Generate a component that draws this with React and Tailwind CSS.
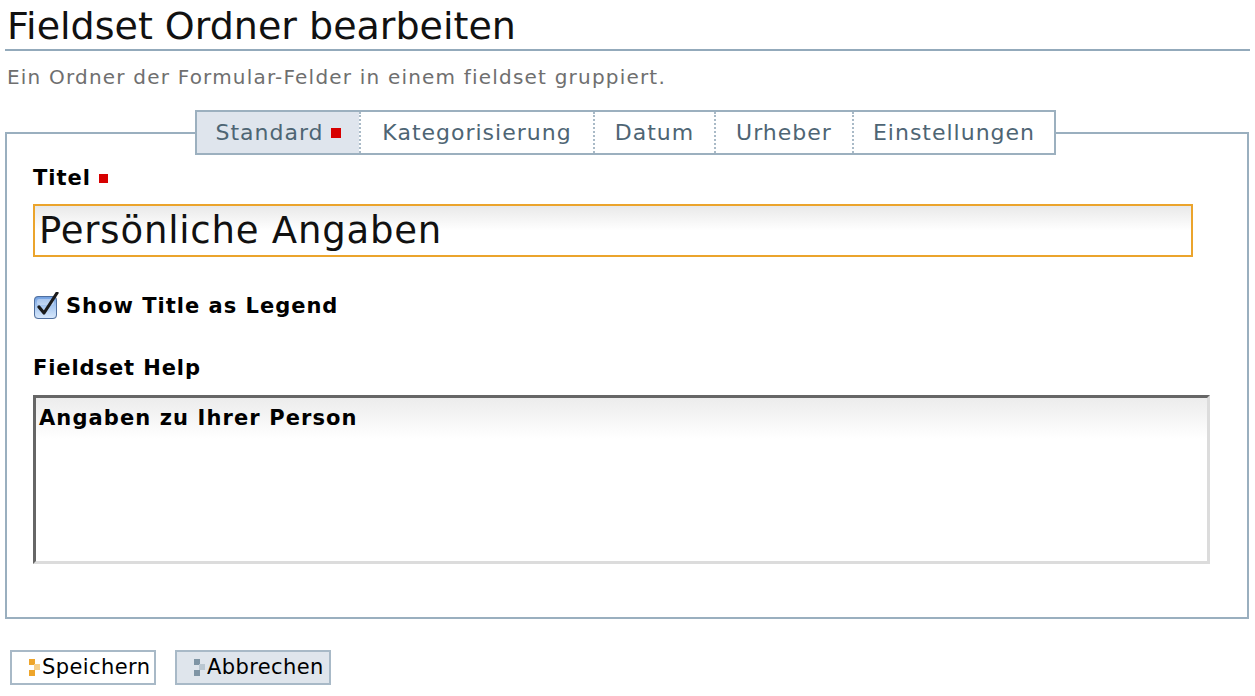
import React from "react";

const tabs = [
  { label: "Standard", w: "w-[162px]", active: true, required: true },
  { label: "Kategorisierung", w: "w-[234px]" },
  { label: "Datum", w: "w-[121px]" },
  { label: "Urheber", w: "w-[138px]" },
  { label: "Einstellungen", w: "w-[202px]" },
];

function RequiredMark({ className = "" }) {
  return <span className={"inline-block w-[9px] h-[9px] bg-[#d70000] " + className} />;
}

function Checkbox() {
  return (
    <svg width="27" height="28" viewBox="0 0 27 28" className="shrink-0">
      <defs>
        <linearGradient id="cb" x1="0" y1="0" x2="0" y2="1">
          <stop offset="0" stopColor="#6f9ee0" />
          <stop offset="0.45" stopColor="#a9c8f0" />
          <stop offset="1" stopColor="#d8e8fb" />
        </linearGradient>
      </defs>
      <rect x="1" y="4" width="23" height="23" rx="4" fill="#c5c9d0" />
      <rect x="1.5" y="4.5" width="22" height="22" rx="3.5" fill="url(#cb)" stroke="#4f6f9f" />
      <rect x="4" y="7" width="17" height="6" rx="2" fill="#ffffff" opacity="0.35" />
      <path d="M6 15 L11 21 L24 1" fill="none" stroke="#1b1b1b" strokeWidth="3.2" strokeLinecap="round" strokeLinejoin="round" />
    </svg>
  );
}

function ButtonIcon({ dark, light }) {
  return (
    <svg width="12" height="17" viewBox="0 0 12 17" className="shrink-0 mr-[1px]">
      <rect x="0" y="0" width="6" height="6" fill={dark} />
      <rect x="5" y="5" width="6" height="6" fill={light} />
      <rect x="0" y="11" width="6" height="6" fill={dark} />
    </svg>
  );
}

export default function App() {
  return (
    <div className="min-h-[696px] bg-white px-[5px] text-black" style={{ fontFamily: '"DejaVu Sans", Verdana, sans-serif' }}>
      <h1 className="pl-[2px] pt-[4px] text-[38px] leading-[45px] font-normal border-b-2 border-[#93aabb] text-[#111]">
        Fieldset Ordner bearbeiten
      </h1>
      <p className="pl-[2px] mt-[12px] text-[20px] leading-[28px] tracking-[1.2px] text-[#6f6f6f]">
        Ein Ordner der Formular-Felder in einem fieldset gruppiert.
      </p>

      <fieldset className="mt-[19px] w-[1244px] border-2 border-[#9aafbf] pb-[53px] px-[26px]">
        <legend className="ml-[162px] flex h-[45px] border-2 border-[#9cb0bf] bg-white">
          {tabs.map((t, i) => (
            <div
              key={t.label}
              className={
                t.w +
                " flex items-center justify-center gap-[7px] text-[22px] tracking-[1px] text-[#4e6574] " +
                (i > 0 ? "border-l-2 border-dotted border-[#a9bac7] " : "") +
                (t.active ? "bg-[#dfe5ed]" : "")
              }
            >
              <span>{t.label}</span>
              {t.required && <RequiredMark className="w-[10px] h-[10px]" />}
            </div>
          ))}
        </legend>

        <label className="mt-[9px] flex items-center gap-[8px] text-[21px] leading-[28px] tracking-[1px] font-bold">
          Titel <RequiredMark />
        </label>
        <div className="mt-[12px] w-[1160px] h-[53px] border-2 border-[#eba42c] bg-gradient-to-b from-[#e9e9e9] via-white to-white flex items-center pl-[4px]">
          <span className="text-[37px] leading-[40px] tracking-[0.8px] text-[#111]">Persönliche Angaben</span>
        </div>

        <div className="mt-[35px] flex items-center gap-[6px] h-[28px]">
          <Checkbox />
          <span className="text-[21px] leading-[28px] tracking-[1px] font-bold">Show Title as Legend</span>
        </div>

        <div className="mt-[34px] text-[21px] leading-[28px] tracking-[0.9px] font-bold">Fieldset Help</div>
        <div className="mt-[13px] w-[1177px] h-[169px] border-[3px] border-t-[#666666] border-l-[#666666] border-r-[#dcdcdc] border-b-[#dcdcdc] bg-gradient-to-b from-[#ececec] via-white via-25% to-white pl-[3px] pt-[6px]">
          <span className="text-[21px] leading-[28px] tracking-[1.1px] font-bold">Angaben zu Ihrer Person</span>
        </div>
      </fieldset>

      <div className="mt-[31px] ml-[5px] flex gap-[19px]">
        <button className="h-[35px] w-[146px] border-2 border-[#a8b9c7] bg-white flex items-center pl-[17px] text-[21px] tracking-[0.4px] text-black">
          <ButtonIcon dark="#eea52b" light="#f6d08c" />
          Speichern
        </button>
        <button className="h-[35px] w-[156px] border-2 border-[#a8b9c7] bg-[#dfe5ec] flex items-center pl-[17px] text-[21px] tracking-[0.4px] text-black">
          <ButtonIcon dark="#7f95a5" light="#bac7d1" />
          Abbrechen
        </button>
      </div>
    </div>
  );
}
